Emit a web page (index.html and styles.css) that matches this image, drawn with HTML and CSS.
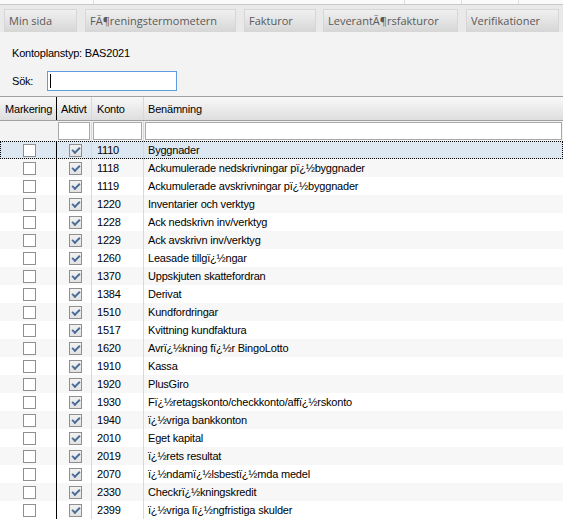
FILE: index.html
```html
<!DOCTYPE html>
<html lang="sv">
	<head>
		<meta charset="UTF-8" />
		<meta name="viewport" content="width=device-width, initial-scale=1.0" />
		<title>Kontoplan</title>

		<link rel="stylesheet" href="styles.css">
	</head>
	<body>
		<div class="topbar">
			<span></span><span></span><span></span><span></span>
		</div>
		<div class="tabs">
			<div class="tab">Min sida</div>
			<div class="tab">FÃ¶reningstermometern</div>
			<div class="tab">Fakturor</div>
			<div class="tab">LeverantÃ¶rsfakturor</div>
			<div class="tab">Verifikationer</div>
		</div>

		<div class="kontoplan">Kontoplanstyp: BAS2021</div>
		<div class="search">
			<label for="sok">Sök:</label>
			<div class="searchbox">
				<input type="text" id="sok" />
				<span class="caret"></span>
			</div>
		</div>

		<div class="grid">
			<div class="row head">
				<div class="cell">Markering</div>
				<div class="cell">Aktivt</div>
				<div class="cell">Konto</div>
				<div class="cell">Benämning</div>
			</div>
			<div class="row filter">
				<div class="cell"></div>
				<div class="cell"><input type="text" /></div>
				<div class="cell"><input type="text" /></div>
				<div class="cell"><input type="text" /></div>
			</div>

			<div class="row selected">
				<div class="cell"><span class="cb"></span></div>
				<div class="cell"><span class="cb on"></span></div>
				<div class="cell">1110</div>
				<div class="cell">Byggnader</div>
			</div>
			<div class="row">
				<div class="cell"><span class="cb"></span></div>
				<div class="cell"><span class="cb on"></span></div>
				<div class="cell">1118</div>
				<div class="cell">Ackumulerade nedskrivningar pï¿½byggnader</div>
			</div>
			<div class="row">
				<div class="cell"><span class="cb"></span></div>
				<div class="cell"><span class="cb on"></span></div>
				<div class="cell">1119</div>
				<div class="cell">Ackumulerade avskrivningar pï¿½byggnader</div>
			</div>
			<div class="row">
				<div class="cell"><span class="cb"></span></div>
				<div class="cell"><span class="cb on"></span></div>
				<div class="cell">1220</div>
				<div class="cell">Inventarier och verktyg</div>
			</div>
			<div class="row">
				<div class="cell"><span class="cb"></span></div>
				<div class="cell"><span class="cb on"></span></div>
				<div class="cell">1228</div>
				<div class="cell">Ack nedskrivn inv/verktyg</div>
			</div>
			<div class="row">
				<div class="cell"><span class="cb"></span></div>
				<div class="cell"><span class="cb on"></span></div>
				<div class="cell">1229</div>
				<div class="cell">Ack avskrivn inv/verktyg</div>
			</div>
			<div class="row">
				<div class="cell"><span class="cb"></span></div>
				<div class="cell"><span class="cb on"></span></div>
				<div class="cell">1260</div>
				<div class="cell">Leasade tillgï¿½ngar</div>
			</div>
			<div class="row">
				<div class="cell"><span class="cb"></span></div>
				<div class="cell"><span class="cb on"></span></div>
				<div class="cell">1370</div>
				<div class="cell">Uppskjuten skattefordran</div>
			</div>
			<div class="row">
				<div class="cell"><span class="cb"></span></div>
				<div class="cell"><span class="cb on"></span></div>
				<div class="cell">1384</div>
				<div class="cell">Derivat</div>
			</div>
			<div class="row">
				<div class="cell"><span class="cb"></span></div>
				<div class="cell"><span class="cb on"></span></div>
				<div class="cell">1510</div>
				<div class="cell">Kundfordringar</div>
			</div>
			<div class="row">
				<div class="cell"><span class="cb"></span></div>
				<div class="cell"><span class="cb on"></span></div>
				<div class="cell">1517</div>
				<div class="cell">Kvittning kundfaktura</div>
			</div>
			<div class="row">
				<div class="cell"><span class="cb"></span></div>
				<div class="cell"><span class="cb on"></span></div>
				<div class="cell">1620</div>
				<div class="cell">Avrï¿½kning fï¿½r BingoLotto</div>
			</div>
			<div class="row">
				<div class="cell"><span class="cb"></span></div>
				<div class="cell"><span class="cb on"></span></div>
				<div class="cell">1910</div>
				<div class="cell">Kassa</div>
			</div>
			<div class="row">
				<div class="cell"><span class="cb"></span></div>
				<div class="cell"><span class="cb on"></span></div>
				<div class="cell">1920</div>
				<div class="cell">PlusGiro</div>
			</div>
			<div class="row">
				<div class="cell"><span class="cb"></span></div>
				<div class="cell"><span class="cb on"></span></div>
				<div class="cell">1930</div>
				<div class="cell">Fï¿½retagskonto/checkkonto/affï¿½rskonto</div>
			</div>
			<div class="row">
				<div class="cell"><span class="cb"></span></div>
				<div class="cell"><span class="cb on"></span></div>
				<div class="cell">1940</div>
				<div class="cell">ï¿½vriga bankkonton</div>
			</div>
			<div class="row">
				<div class="cell"><span class="cb"></span></div>
				<div class="cell"><span class="cb on"></span></div>
				<div class="cell">2010</div>
				<div class="cell">Eget kapital</div>
			</div>
			<div class="row">
				<div class="cell"><span class="cb"></span></div>
				<div class="cell"><span class="cb on"></span></div>
				<div class="cell">2019</div>
				<div class="cell">ï¿½rets resultat</div>
			</div>
			<div class="row">
				<div class="cell"><span class="cb"></span></div>
				<div class="cell"><span class="cb on"></span></div>
				<div class="cell">2070</div>
				<div class="cell">ï¿½ndamï¿½lsbestï¿½mda medel</div>
			</div>
			<div class="row">
				<div class="cell"><span class="cb"></span></div>
				<div class="cell"><span class="cb on"></span></div>
				<div class="cell">2330</div>
				<div class="cell">Checkrï¿½kningskredit</div>
			</div>
			<div class="row">
				<div class="cell"><span class="cb"></span></div>
				<div class="cell"><span class="cb on"></span></div>
				<div class="cell">2399</div>
				<div class="cell">ï¿½vriga lï¿½ngfristiga skulder</div>
			</div>
		</div>
	</body>
</html>
```

FILE: styles.css
```css
body {
	margin: 0;
	width: 563px;
	height: 519px;
	overflow: hidden;
	background-color: #f3f3f3;
	font-family: "Liberation Sans", Arial, sans-serif;
	font-size: 11px;
	letter-spacing: -0.2px;
	color: #000;
}

/* bottom edge of the toolbar above the tabs */
.topbar {
	display: flex;
	height: 4px;
	background-color: #fafafa;
}

.topbar span {
	border-right: 1px solid #dedede;
}

.topbar span:nth-child(1) { width: 93px; }
.topbar span:nth-child(2) { width: 310px; }
.topbar span:nth-child(3) { width: 56px; }
.topbar span:nth-child(4) { width: 56px; }

.tabs {
	display: flex;
	align-items: flex-end;
	gap: 8px;
	height: 27px;
	padding-left: 4px;
	border-top: 1px solid #c9c9c9;
	background-color: #e9e9e9;
}

.tab {
	box-sizing: border-box;
	height: 23px;
	padding-left: 4px;
	border: 1px solid #d6d6d6;
	border-bottom: 0;
	background: linear-gradient(#f0f0f0, #d6d6d6);
	color: #5a5a5a;
	font-family: "Open Sans", sans-serif;
	font-size: 11px;
	letter-spacing: 0;
	line-height: 21px;
	white-space: nowrap;
}

.tab:nth-child(1) { width: 73px; }
.tab:nth-child(2) { width: 151px; }
.tab:nth-child(3) { width: 72px; margin-right: -1px; }
.tab:nth-child(4) { width: 135px; }
.tab:nth-child(5) { width: 93px; }

.kontoplan {
	margin: 11px 12px 0;
	line-height: 20px;
}

.search {
	display: flex;
	align-items: center;
	height: 20px;
	margin: 8px 0 0 12px;
}

.search label {
	width: 35px;
}

.searchbox {
	position: relative;
}

.searchbox input {
	display: block;
	box-sizing: border-box;
	width: 130px;
	height: 20px;
	margin: 0;
	border: 1px solid #5d9ce0;
	background-color: #fff;
	outline: none;
}

.caret {
	position: absolute;
	left: 3px;
	top: 3px;
	width: 1px;
	height: 14px;
	background-color: #000;
}

.grid {
	margin-top: 5px;
	border-top: 1px solid #a0a0a0;
}

.row {
	display: grid;
	grid-template-columns: 57px 35px 52px 1fr;
	height: 18px;
	line-height: 18px;
	background-color: #fff;
}

.row:nth-child(even) {
	background-color: #f7f7f7;
}

.cell {
	box-sizing: border-box;
	display: flex;
	align-items: center;
	border-right: 1px solid #d8d8d8;
	white-space: nowrap;
	overflow: hidden;
}

.cell:nth-child(1) {
	border-right-color: #000;
	padding-left: 23px;
}

.cell:nth-child(2) {
	padding-left: 12px;
}

.cell:nth-child(3) {
	padding-left: 5px;
}

.cell:nth-child(4) {
	padding-left: 4px;
	border-right: 0;
}

.head {
	height: 23px;
	border-bottom: 1px solid #a0a0a0;
	background: linear-gradient(#f8f8f8, #dedede);
}

.head .cell {
	padding-left: 4px;
}

.head .cell:nth-child(1) {
	padding-left: 5px;
}

.head .cell:nth-child(3) {
	padding-left: 5px;
}

.row.filter {
	height: 20px;
	background-color: #f3f3f3;
}

.filter .cell {
	padding: 0;
	align-items: flex-start;
}

.filter .cell:nth-child(1) {
	border-right-color: #f3f3f3;
}

.filter input {
	box-sizing: border-box;
	width: 100%;
	height: 18px;
	margin: 1px 1px 0;
	border: 1px solid #a9a9a9;
	background-color: #fff;
}

.row.selected {
	background-color: #dde7f1;
	outline: 1px dotted #000;
	outline-offset: -1px;
}

.cb {
	position: relative;
	box-sizing: border-box;
	width: 13px;
	height: 13px;
	border: 1px solid #8f8f8f;
	background-color: #fff;
}

.cb.on {
	background: linear-gradient(#f2f2f2, #e2e2e2);
}

.cb.on::after {
	content: "";
	position: absolute;
	left: 2px;
	top: 2px;
	width: 6px;
	height: 3px;
	border-left: 2px solid #4a6d96;
	border-bottom: 2px solid #4a6d96;
	transform: rotate(-45deg);
}
```
